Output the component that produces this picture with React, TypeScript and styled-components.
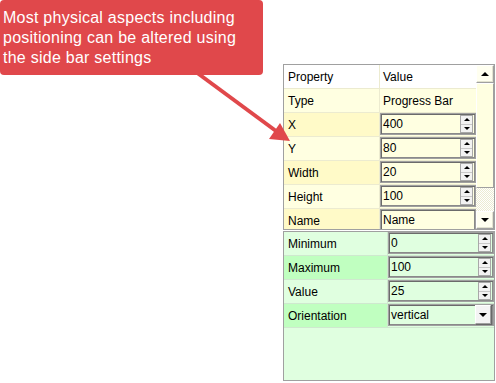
import React from "react";
import styled, { createGlobalStyle } from "styled-components";

const GlobalStyle = createGlobalStyle`
  html, body {
    margin: 0;
    padding: 0;
    background: #ffffff;
  }
  body {
    font-family: "Liberation Sans", Arial, sans-serif;
  }
`;

const Page = styled.div`
  position: relative;
  width: 496px;
  height: 383px;
  display: grid;
  grid-template-columns: 263px 212px;
  column-gap: 20px;
  align-items: start;
  overflow: hidden;
`;

const Callout = styled.div`
  height: 75px;
  box-sizing: border-box;
  padding: 8px 18px 0 3px;
  background: #e0484b;
  border-radius: 4px;
  color: #ffffff;
  font-size: 16px;
  line-height: 20px;
  letter-spacing: 0.25px;
  z-index: 1;
`;

const Arrow = styled.svg`
  position: absolute;
  left: 0;
  top: 0;
  pointer-events: none;
  z-index: 2;
`;

const Inspector = styled.div`
  padding-top: 64px;
  display: flex;
  flex-direction: column;
  gap: 1px;
  font-size: 12px;
  color: #000;
`;

const Panel = styled.div<{ $height: number; $bg: string }>`
  height: ${({ $height }) => $height}px;
  box-sizing: border-box;
  border: 1px solid #a0a0a0;
  background: ${({ $bg }) => $bg};
  display: flex;
  overflow: hidden;
`;

const Grid = styled.div`
  flex: 1;
  display: flex;
  flex-direction: column;
`;

const Row = styled.div<{ $cols: string; $height?: number; $line: string }>`
  display: grid;
  grid-template-columns: ${({ $cols }) => $cols};
  height: ${({ $height }) => $height ?? 24}px;
  flex-shrink: 0;
  box-sizing: border-box;
  border-bottom: 1px solid ${({ $line }) => $line};
`;

const Label = styled.div<{ $bg: string; $line: string }>`
  display: flex;
  align-items: center;
  padding-left: 4px;
  background: ${({ $bg }) => $bg};
  border-right: 1px solid ${({ $line }) => $line};
`;

const ValueCell = styled.div<{ $bg: string }>`
  display: flex;
  align-items: center;
  padding-left: 3px;
  background: ${({ $bg }) => $bg};
`;

const EditCell = styled.div`
  display: flex;
  padding: 0 0 1px 0;
`;

const Sunken = styled.div<{ $bg: string }>`
  flex: 1;
  display: flex;
  align-items: center;
  box-sizing: border-box;
  padding: 0 1px 0 1px;
  background: ${({ $bg }) => $bg};
  border: 1px solid #a0a0a0;
  box-shadow: inset 1px 1px 0 #6b6b6b, inset -1px -1px 0 #8a8a8a;
`;

const EditText = styled.span`
  flex: 1;
  padding-left: 1px;
`;

const Spin = styled.div`
  width: 13px;
  height: 18px;
  display: flex;
  flex-direction: column;
  box-sizing: border-box;
  border: 1px solid #a8a8a8;
  background: #f2f2f2;
  margin-right: 1px;
`;

const SpinHalf = styled.div<{ $top?: boolean }>`
  flex: 1;
  display: flex;
  align-items: center;
  justify-content: center;
  border-bottom: ${({ $top }) => ($top ? "1px solid #c8c8c8" : "none")};
`;

const Tri = styled.span<{ $up?: boolean; $size?: number }>`
  width: 0;
  height: 0;
  border-left: ${({ $size }) => $size ?? 3}px solid transparent;
  border-right: ${({ $size }) => $size ?? 3}px solid transparent;
  ${({ $up, $size }) =>
    $up
      ? `border-bottom: ${($size ?? 3)}px solid #000;`
      : `border-top: ${($size ?? 3)}px solid #000;`}
`;

const DropButton = styled.div`
  width: 16px;
  height: 19px;
  box-sizing: border-box;
  display: flex;
  align-items: center;
  justify-content: center;
  background: #f4f4f4;
  border: 1px solid #a0a0a0;
  border-top-color: #ffffff;
  border-left-color: #ffffff;
  box-shadow: 1px 1px 0 #696969;
  margin: 0 1px 1px 0;
`;

const ScrollBar = styled.div`
  width: 18px;
  display: flex;
  flex-direction: column;
  background: #ffffe1;
`;

const ScrollButton = styled.div`
  height: 18px;
  flex-shrink: 0;
  display: flex;
  align-items: center;
  justify-content: center;
  box-sizing: border-box;
  background: #fffff0;
  border: 1px solid #ffffff;
  border-right-color: #a0a0a0;
  border-bottom-color: #a0a0a0;
  box-shadow: inset -1px -1px 0 #e3e3d0;
`;

const Thumb = styled.div`
  height: 105px;
  flex-shrink: 0;
  box-sizing: border-box;
  background: #ffffe1;
  border: 1px solid #ffffff;
  border-right-color: #a0a0a0;
  border-bottom-color: #a0a0a0;
`;

const Track = styled.div`
  flex: 1;
  background: repeating-conic-gradient(#ffffff 0 25%, #ecebd2 0 50%) 0 0 / 2px 2px;
`;

const SpinBox = ({ value, bg }: { value: string; bg: string }) => (
  <EditCell>
    <Sunken $bg={bg}>
      <EditText>{value}</EditText>
      <Spin>
        <SpinHalf $top>
          <Tri $up />
        </SpinHalf>
        <SpinHalf>
          <Tri />
        </SpinHalf>
      </Spin>
    </Sunken>
  </EditCell>
);

const Y_LIGHT = "#ffffe1";
const Y_DARK = "#fffac8";
const Y_LINE = "#ecebd0";
const G_LIGHT = "#e0ffe0";
const G_DARK = "#c0ffc0";
const G_LINE = "#cfe8cf";

const topRows = [
  { label: "X", value: "400" },
  { label: "Y", value: "80" },
  { label: "Width", value: "20" },
  { label: "Height", value: "100" },
];

const bottomRows = [
  { label: "Minimum", value: "0" },
  { label: "Maximum", value: "100" },
  { label: "Value", value: "25" },
];

export default function App() {
  const tip = { x: 290, y: 141 };
  return (
    <>
      <GlobalStyle />
      <Page>
        <Callout>
          Most physical aspects including positioning can be altered using the
          side bar settings
        </Callout>
        <Inspector>
          <Panel $height={166} $bg={Y_LIGHT}>
            <Grid>
              <Row $cols="96px 1fr" $height={24} $line={Y_LINE}>
                <Label $bg="#ffffff" $line={Y_LINE}>Property</Label>
                <ValueCell $bg="#ffffff">Value</ValueCell>
              </Row>
              <Row $cols="96px 1fr" $line={Y_LINE}>
                <Label $bg={Y_LIGHT} $line={Y_LINE}>Type</Label>
                <ValueCell $bg={Y_LIGHT}>Progress Bar</ValueCell>
              </Row>
              {topRows.map((r, i) => (
                <Row key={r.label} $cols="96px 1fr" $line={Y_LINE}>
                  <Label $bg={i % 2 === 0 ? Y_DARK : Y_LIGHT} $line={Y_LINE}>
                    {r.label}
                  </Label>
                  <SpinBox value={r.value} bg={Y_LIGHT} />
                </Row>
              ))}
              <Row $cols="96px 1fr" $line={Y_LINE}>
                <Label $bg={Y_DARK} $line={Y_LINE}>Name</Label>
                <EditCell>
                  <Sunken $bg={Y_LIGHT}>
                    <EditText>Name</EditText>
                  </Sunken>
                </EditCell>
              </Row>
            </Grid>
            <ScrollBar>
              <ScrollButton>
                <Tri $up $size={4} />
              </ScrollButton>
              <Thumb />
              <Track />
              <ScrollButton>
                <Tri $size={4} />
              </ScrollButton>
            </ScrollBar>
          </Panel>
          <Panel $height={150} $bg={G_LIGHT}>
            <Grid>
              {bottomRows.map((r, i) => (
                <Row key={r.label} $cols="104px 1fr" $line={G_LINE}>
                  <Label $bg={i % 2 === 0 ? G_LIGHT : G_DARK} $line={G_LINE}>
                    {r.label}
                  </Label>
                  <SpinBox value={r.value} bg={G_LIGHT} />
                </Row>
              ))}
              <Row $cols="104px 1fr" $line={G_LINE}>
                <Label $bg={G_DARK} $line={G_LINE}>Orientation</Label>
                <EditCell>
                  <Sunken $bg={G_LIGHT}>
                    <EditText>vertical</EditText>
                    <DropButton>
                      <Tri $size={4} />
                    </DropButton>
                  </Sunken>
                </EditCell>
              </Row>
            </Grid>
          </Panel>
        </Inspector>
        <Arrow width="496" height="383" viewBox="0 0 496 383">
          <line
            x1="196"
            y1="72"
            x2={tip.x - 14}
            y2={tip.y - 10}
            stroke="#e0484b"
            strokeWidth="4"
          />
          <polygon
            points={`${tip.x},${tip.y} 269,139 280,123`}
            fill="#e0484b"
          />
        </Arrow>
      </Page>
    </>
  );
}
